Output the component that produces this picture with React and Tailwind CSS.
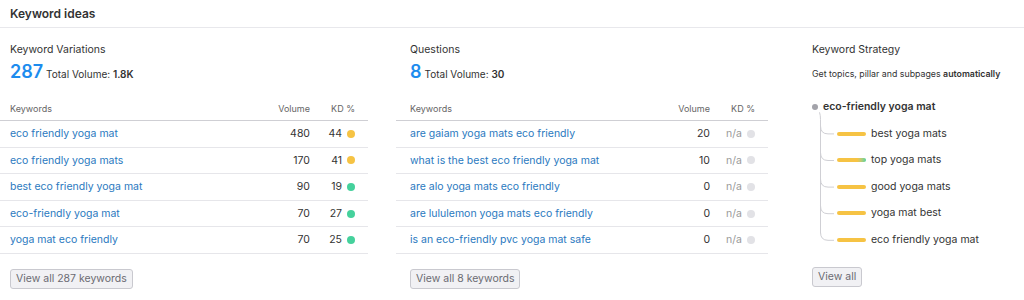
const variations = [
  { kw: 'eco friendly yoga mat', vol: 480, kd: 44, color: 'bg-[#f6c344]' },
  { kw: 'eco friendly yoga mats', vol: 170, kd: 41, color: 'bg-[#f6c344]' },
  { kw: 'best eco friendly yoga mat', vol: 90, kd: 19, color: 'bg-[#45d19c]' },
  { kw: 'eco-friendly yoga mat', vol: 70, kd: 27, color: 'bg-[#45d19c]' },
  { kw: 'yoga mat eco friendly', vol: 70, kd: 25, color: 'bg-[#45d19c]' },
];

const questions = [
  { kw: 'are gaiam yoga mats eco friendly', vol: 20, kd: 'n/a', color: 'bg-[#e2e2e6]' },
  { kw: 'what is the best eco friendly yoga mat', vol: 10, kd: 'n/a', color: 'bg-[#e2e2e6]' },
  { kw: 'are alo yoga mats eco friendly', vol: 0, kd: 'n/a', color: 'bg-[#e2e2e6]' },
  { kw: 'are lululemon yoga mats eco friendly', vol: 0, kd: 'n/a', color: 'bg-[#e2e2e6]' },
  { kw: 'is an eco-friendly pvc yoga mat safe', vol: 0, kd: 'n/a', color: 'bg-[#e2e2e6]' },
];

const subpages = ['best yoga mats', 'top yoga mats', 'good yoga mats', 'yoga mat best', 'eco friendly yoga mat'];

function Button({ children }) {
  return (
    <button className="block h-[20px] rounded-[3px] border border-[#c9c9cf] bg-[#f1f1f4] px-[5px] text-[10.5px] leading-none text-[#6b6b72]">
      {children}
    </button>
  );
}

function KeywordTable({ title, count, volume, rows, buttonLabel }) {
  return (
    <div className="w-[400px] shrink-0 pl-[10px] pt-[15px]">
      <div className="h-[14px] text-[10.5px] leading-[14px] text-[#333]">{title}</div>
      <div className="mt-[3px] flex h-[24px] items-baseline gap-[3px]">
        <span className="text-[18px] font-semibold leading-[24px] text-[#1d8cee]">{count}</span>
        <span className="text-[10px] text-[#333]">
          Total Volume: <b className="font-semibold">{volume}</b>
        </span>
      </div>
      <div className="-ml-[14px] mt-[13px] w-[372px]">
        <div className="flex h-[24px] items-center border-b border-[#cfcfd4] pl-[14px] pr-[13px] text-[9px] text-[#666]">
          <div className="flex-1">Keywords</div>
          <div className="w-[60px] text-right">Volume</div>
          <div className="w-[45px] text-right">KD %</div>
        </div>
        {rows.map((r) => (
          <div
            key={r.kw}
            className="box-border flex h-[26.6px] items-center border-b border-[#e6e6ea] pl-[14px] pr-[13px] text-[10.5px]"
          >
            <div className="flex-1 text-[#2a79c0]">{r.kw}</div>
            <div className="w-[60px] text-right text-[#333]">{r.vol}</div>
            <div className="flex w-[45px] items-center justify-end gap-[5px]">
              <span className={r.kd === 'n/a' ? 'text-[#999]' : 'text-[#333]'}>{r.kd}</span>
              <span className={`h-[8px] w-[8px] rounded-full ${r.color}`} />
            </div>
          </div>
        ))}
      </div>
      <div className="mt-[15px]">
        <Button>{buttonLabel}</Button>
      </div>
    </div>
  );
}

function Strategy() {
  const rowH = 26.6;
  const lastY = rowH * 5 + rowH / 2;
  return (
    <div className="flex-1 pl-[12px] pt-[15px]">
      <div className="h-[14px] text-[10.5px] leading-[14px] text-[#333]">Keyword Strategy</div>
      <div className="mt-[10px] h-[14px] text-[8.8px] leading-[14px] text-[#333]">
        Get topics, pillar and subpages <b className="font-semibold">automatically</b>
      </div>
      <div className="relative mt-[12.7px]">
        <svg className="absolute left-0 top-0" width="40" height="170" fill="none" stroke="#cfcfd4" strokeWidth="1">
          <path d={`M7.5 ${rowH / 2 + 5} Q8.5 ${rowH / 2 + 8} 8.5 ${rowH / 2 + 12} L8.5 ${lastY - 7}`} />
          {subpages.map((_, i) => {
            const cy = rowH * (i + 1) + rowH / 2;
            return <path key={i} d={`M8.5 ${cy - 8} Q8.5 ${cy} 16 ${cy} L22 ${cy}`} />;
          })}
        </svg>
        <div className="flex h-[26.6px] items-center">
          <span className="h-[6px] w-[6px] rounded-full bg-[#a3a3aa]" />
          <span className="ml-[5px] text-[10.5px] font-semibold text-[#333]">eco-friendly yoga mat</span>
        </div>
        {subpages.map((s, i) => (
          <div key={s} className="flex h-[26.6px] items-center pl-[25px]">
            <span
              className={`h-[4px] w-[29px] rounded-full ${
                i === 1 ? 'bg-gradient-to-r from-[#f6c344] from-70% to-[#45d19c]' : 'bg-[#f6c344]'
              }`}
            />
            <span className="ml-[5px] text-[10.5px] text-[#333]">{s}</span>
          </div>
        ))}
      </div>
      <div className="mt-[14px]">
        <Button>View all</Button>
      </div>
    </div>
  );
}

export default function App() {
  return (
    <div className="h-[300px] w-[1024px] overflow-hidden bg-white font-['Inter',sans-serif]">
      <div className="flex h-[28px] items-center border-b border-[#e8e8ec] px-[10px] text-[12px] font-semibold text-[#333]">
        Keyword ideas
      </div>
      <div className="flex">
        <KeywordTable title="Keyword Variations" count="287" volume="1.8K" rows={variations} buttonLabel="View all 287 keywords" />
        <KeywordTable title="Questions" count="8" volume="30" rows={questions} buttonLabel="View all 8 keywords" />
        <Strategy />
      </div>
    </div>
  );
}
